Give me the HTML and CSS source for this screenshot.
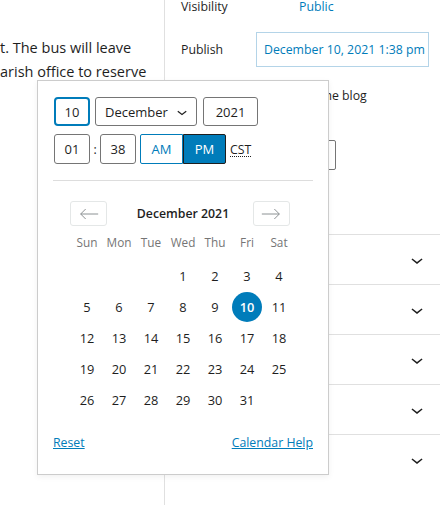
FILE: index.html
```html
<!DOCTYPE html>
<html>
<head>
<meta charset="utf-8">
<link rel="stylesheet" href="styles.css">
</head>
<body>
<div class="screen">
  <div class="editor">
    <p class="para"><span>t. The bus will leave</span><span>arish office to reserve</span></p>
  </div>
  <div class="sidebar">
    <div class="row row-visibility">
      <span class="label">Visibility</span>
      <span class="value-link">Public</span>
    </div>
    <div class="row row-publish">
      <span class="label">Publish</span>
      <span class="publish-btn">December 10, 2021 1:38 pm</span>
    </div>
    <div class="row row-sticky">
      <span class="sticky-text">Stick to the top of the blog</span>
    </div>
    <div class="author-select"></div>
    <div class="panels">
      <div class="panel"><svg class="chev" viewBox="0 0 24 24" width="24" height="24"><path d="M17.5 11.6L12 16l-5.5-4.4.9-1.2L12 14l4.6-3.6 1 1.2z"/></svg></div>
      <div class="panel"><svg class="chev" viewBox="0 0 24 24" width="24" height="24"><path d="M17.5 11.6L12 16l-5.5-4.4.9-1.2L12 14l4.6-3.6 1 1.2z"/></svg></div>
      <div class="panel"><svg class="chev" viewBox="0 0 24 24" width="24" height="24"><path d="M17.5 11.6L12 16l-5.5-4.4.9-1.2L12 14l4.6-3.6 1 1.2z"/></svg></div>
      <div class="panel"><svg class="chev" viewBox="0 0 24 24" width="24" height="24"><path d="M17.5 11.6L12 16l-5.5-4.4.9-1.2L12 14l4.6-3.6 1 1.2z"/></svg></div>
      <div class="panel"><svg class="chev" viewBox="0 0 24 24" width="24" height="24"><path d="M17.5 11.6L12 16l-5.5-4.4.9-1.2L12 14l4.6-3.6 1 1.2z"/></svg></div>
    </div>
  </div>

  <div class="popover">
    <div class="date-row">
      <div class="field f-day focused">10</div>
      <div class="field f-month">December<svg class="sel-chev" viewBox="0 0 24 24" width="20" height="20"><path d="M17.5 11.6L12 16l-5.5-4.4.9-1.2L12 14l4.6-3.6 1 1.2z"/></svg></div>
      <div class="field f-year">2021</div>
    </div>
    <div class="time-row">
      <div class="field f-hour">01</div>
      <span class="colon">:</span>
      <div class="field f-min">38</div>
      <div class="ampm">
        <span class="am">AM</span>
        <span class="pm">PM</span>
      </div>
      <abbr class="tz">CST</abbr>
    </div>
    <div class="sep"></div>
    <div class="cal-head">
      <span class="nav"><svg viewBox="0 0 24 14" width="20" height="12"><path d="M23 7H2M8 1L2 7l6 6" fill="none" stroke="#82888a" stroke-width="1.1"/></svg></span>
      <span class="month-title">December 2021</span>
      <span class="nav"><svg viewBox="0 0 24 14" width="20" height="12"><path d="M1 7h21M16 1l6 6-6 6" fill="none" stroke="#82888a" stroke-width="1.1"/></svg></span>
    </div>
    <div class="weekdays">
      <span>Sun</span><span>Mon</span><span>Tue</span><span>Wed</span><span>Thu</span><span>Fri</span><span>Sat</span>
    </div>
    <div class="days">
      <span></span><span></span><span></span>
      <span>1</span><span>2</span><span>3</span><span>4</span>
      <span>5</span><span>6</span><span>7</span><span>8</span><span>9</span><span class="sel"><b>10</b></span><span>11</span>
      <span>12</span><span>13</span><span>14</span><span>15</span><span>16</span><span>17</span><span>18</span>
      <span>19</span><span>20</span><span>21</span><span>22</span><span>23</span><span>24</span><span>25</span>
      <span>26</span><span>27</span><span>28</span><span>29</span><span>30</span><span>31</span><span></span>
    </div>
    <div class="links">
      <a class="link">Reset</a>
      <a class="link">Calendar Help</a>
    </div>
  </div>
</div>
</body>
</html>
```

FILE: styles.css
```css
* { box-sizing: border-box; }
html, body { margin: 0; padding: 0; background: #fff; }
body {
  font-family: "Open Sans", "Noto Sans", sans-serif;
  color: #1e1e1e;
  font-size: 12.3px;
}
.screen {
  position: relative;
  width: 440px;
  height: 505px;
  overflow: hidden;
  display: flex;
}
.editor {
  width: 165px;
  flex: none;
  border-right: 1px solid #e0e0e0;
  overflow: hidden;
}
.para {
  margin: 36px 0 0 0;
  font-size: 14.5px;
  line-height: 24px;
  display: flex;
  flex-direction: column;
  white-space: nowrap;
}
.sidebar {
  flex: 1;
  display: flex;
  flex-direction: column;
}
.row {
  display: flex;
  align-items: center;
  padding-left: 16px;
}
.row-visibility { height: 16px; line-height: 16px; margin-top: -1px; }
.row-visibility .label { width: 118px; }
.value-link { color: #007cba; }
.row-publish { margin-top: 17px; height: 35px; }
.row-publish .label { width: 75px; }
.publish-btn {
  height: 35px;
  width: 173px;
  border: 1px solid #b4d4e8;
  color: #007cba;
  display: flex;
  align-items: center;
  padding-left: 7px;
  white-space: nowrap;
}
.row-sticky { margin-top: 19px; height: 18px; padding-left: 51px; }
.sticky-text { white-space: nowrap; }
.author-select {
  margin: 36px 0 0 16px;
  width: 155px;
  height: 30px;
  border: 1px solid #757575;
  border-radius: 2px;
}
.panels { margin-top: 64px; }
.panel {
  height: 50px;
  border-top: 1px solid #e0e0e0;
  display: flex;
  align-items: center;
  justify-content: flex-end;
  padding-right: 11px;
}
.chev { fill: #1e1e1e; }

/* popover */
.popover {
  position: absolute;
  left: 37px;
  top: 80px;
  width: 292px;
  border: 1px solid #ccc;
  box-shadow: 0 2px 6px rgba(0,0,0,0.06);
  background: #fff;
  padding: 16px 15px 22px 15px;
  z-index: 5;
}
.date-row, .time-row {
  display: flex;
  align-items: center;
}
.date-row { height: 29px; }
.time-row { height: 30px; margin-top: 8px; }
.field {
  height: 100%;
  border: 1px solid #757575;
  border-radius: 3px;
  display: flex;
  align-items: center;
  justify-content: center;
  font-size: 13px;
  color: #1e1e1e;
}
.f-day { width: 36px; margin-left: 1px; }
.focused { border: 2px solid #007cba; border-radius: 4px; }
.f-month { width: 102px; margin-left: 5px; justify-content: space-between; padding: 0 4px 0 9px; }
.sel-chev { fill: #1e1e1e; }
.f-year { width: 55px; margin-left: 6px; }
.f-hour { width: 36px; margin-left: 1px; }
.colon { width: 10px; text-align: center; }
.f-min { width: 36px; }
.ampm { display: flex; height: 100%; margin-left: 4px; }
.ampm span {
  width: 43px;
  display: flex;
  align-items: center;
  justify-content: center;
  font-size: 13px;
}
.am { border: 1px solid #007cba; color: #007cba; border-radius: 2px 0 0 2px; }
.pm { background: #007cba; color: #fff; border: 1px solid #1e1e1e; border-radius: 0 2px 2px 0; }
.tz {
  margin-left: 4px;
  text-decoration: underline dotted;
  text-underline-offset: 2px;
  color: #1e1e1e;
}
.sep { height: 1px; background: #ddd; margin-top: 16px; }
.cal-head {
  margin-top: 20px;
  height: 25px;
  display: flex;
  align-items: center;
  justify-content: space-between;
  padding: 0 23px 0 17px;
}
.nav {
  width: 37px;
  height: 25px;
  border: 1px solid #e4e7e7;
  border-radius: 3px;
  display: flex;
  align-items: center;
  justify-content: center;
}
.month-title { font-weight: 600; font-size: 12.3px; padding-left: 6px; }
.weekdays, .days {
  display: grid;
  grid-template-columns: repeat(7, 32px);
  width: 224px;
  margin: 0 auto;
  justify-items: center;
  align-items: center;
}
.weekdays { margin-top: 7px; height: 18px; color: #757575; font-size: 11.8px; }
.days { margin-top: 9px; grid-auto-rows: 31px; font-size: 12.8px; }
.days span { display: flex; align-items: center; justify-content: center; width: 30px; height: 30px; }
.days .sel { background: #007cba; color: #fff; border-radius: 50%; }
.days .sel b { font-weight: 600; }
.links {
  margin-top: 19px;
  display: flex;
  justify-content: space-between;
  line-height: 18px;
}
.link { color: #007cba; text-decoration: underline; }
```
